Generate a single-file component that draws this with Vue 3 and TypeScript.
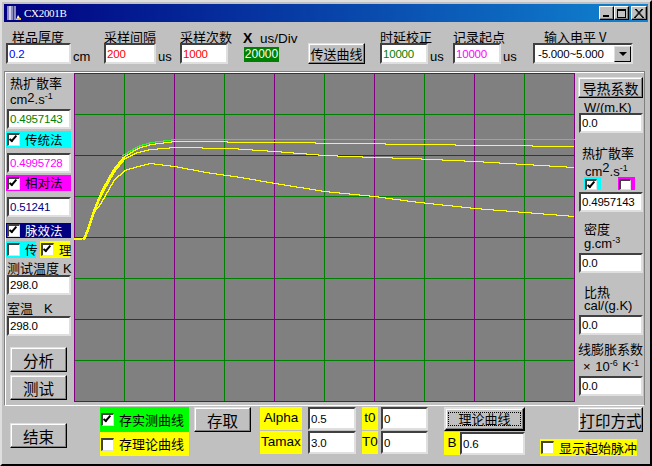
<script setup lang="ts">
type Pt = [number, number]

const xs = [124, 224, 324, 424, 524]
const xp = [74, 174, 274, 374, 474, 574]
const yg = [114, 196, 278, 360]
const yp = [73, 155, 237, 319, 401]

// Build a stepped, one-pixel trace from sampled points, like a GDI polyline.
function trace(points: Pt[]): string {
  let d = ''
  for (let i = 0; i < points.length - 1; i++) {
    const [x0, y0] = points[i]
    const [x1, y1] = points[i + 1]
    for (let x = x0; x < x1; x++) {
      const y = Math.round(y0 + ((y1 - y0) * (x - x0)) / (x1 - x0)) + 0.5
      d += `${d ? 'L' : 'M'}${x} ${y}H${x + 1}`
    }
  }
  return d
}

const rise: Pt[] = [[74, 238], [82, 238], [85, 235], [89, 224], [93, 212], [98, 199], [103, 188]]
const greenTrace = trace([[122, 155], [137, 146], [150, 142], [174, 139], [575, 139]])
const c1 = trace([...rise, [113, 170], [124, 156], [137, 148], [150, 144], [174, 141], [280, 142], [350, 143], [420, 144], [490, 145], [574, 146]])
const c2 = trace([...rise.slice(0, 6), [103, 190], [113, 172], [124, 158], [137, 152], [150, 149], [174, 147], [230, 148], [274, 151], [324, 155], [374, 157], [410, 158], [474, 161], [524, 164], [574, 167]])
const c3 = trace([...rise.slice(0, 5), [100, 203], [113, 180], [124, 170], [137, 166], [150, 163], [174, 166], [205, 172], [240, 177], [274, 183], [324, 191], [374, 196], [410, 201], [474, 208], [524, 212], [574, 216]])
const band = trace([[83, 238], [85, 235], [89, 224], [93, 212], [98, 199], [103, 188], [113, 170], [124, 156]])
</script>

<template>
  <div class="win">
    <div class="title">
      <svg class="appicon" width="16" height="16" viewBox="0 0 16 16">
        <rect x="1" y="1" width="9" height="14" fill="#8c8cc0" />
        <rect x="3" y="1" width="2" height="14" fill="#d0d0e8" />
        <rect x="7" y="1" width="1" height="14" fill="#404080" />
        <path d="M10 15l2-5 3 5z" fill="#fff" />
        <rect x="11" y="13" width="4" height="2" fill="#e0c040" />
      </svg>
      <span class="cap">CX2001B</span>
      <div class="winbtns">
        <span class="wb"><i class="min"></i></span>
        <span class="wb"><i class="max"></i></span>
        <span class="wb close">
          <svg width="10" height="9" viewBox="0 0 10 9"><path d="M1 0l8 9M2 0l8 9M9 0L1 9M8 0L0 9" stroke="#000" stroke-width="1" fill="none" /></svg>
        </span>
      </div>
    </div>

    <div class="top">
      <div class="fld f1">
        <label class="lb c">样品厚度</label>
        <div class="row"><input class="inp w64 blue" value="0.2" /><span class="unit">cm</span></div>
      </div>
      <div class="fld f2">
        <label class="lb">采样间隔</label>
        <div class="row"><input class="inp w52 red" value="200" /><span class="unit">us</span></div>
      </div>
      <div class="fld f3">
        <label class="lb">采样次数</label>
        <input class="inp w48 red" value="1000" />
      </div>
      <div class="fld f4">
        <span class="xdiv"><b>X</b> us/Div</span>
        <span class="val20">20000</span>
      </div>
      <button class="btn send">传送曲线</button>
      <div class="fld f5">
        <label class="lb">时延校正</label>
        <div class="row"><input class="inp w48 green" value="10000" /><span class="unit">us</span></div>
      </div>
      <div class="fld f6">
        <label class="lb">记录起点</label>
        <div class="row"><input class="inp w48 pink" value="10000" /><span class="unit">us</span></div>
      </div>
      <div class="fld f7">
        <label class="lb">输入电平 V</label>
        <div class="combo">
          <span>-5.000~5.000</span>
          <span class="arrow"><i></i></span>
        </div>
      </div>
    </div>

    <div class="main">
      <div class="left">
        <div class="lt first-l">热扩散率</div>
        <div class="lt latin">cm<span class="s2">2</span>.s<sup>-1</sup></div>
        <input class="inp lw green" value="0.4957143" />
        <div class="chk bgc c1r"><span class="cb on"></span><span>传统法</span></div>
        <input class="inp lw pink i2" value="0.4995728" />
        <div class="chk bgm c2r"><span class="cb on"></span><span>相对法</span></div>
        <input class="inp lw navy i3" value="0.51241" />
        <div class="chk bgn c3r"><span class="cb on"></span><span>脉效法</span></div>
        <div class="twin">
          <div class="chk bgc small"><span class="cb"></span><span>传</span></div>
          <div class="chk bgy small"><span class="cb on"></span><span>理</span></div>
        </div>
        <div class="lt tmp">测试温度<em class="k1">K</em></div>
        <input class="inp lw" value="298.0" />
        <div class="lt room">室温<em class="k2">K</em></div>
        <input class="inp lw" value="298.0" />
        <button class="btn lbtn first">分析</button>
        <button class="btn lbtn">测试</button>
      </div>

      <svg class="plot" width="501" height="329" viewBox="74 73 501 329" shape-rendering="crispEdges">
        <rect x="74" y="73" width="501" height="329" fill="#808080" />
        <path v-for="x in xs" :key="'a' + x" :d="`M${x + 0.5} 73V402`" stroke="#008000" />
        <path v-for="y in yg" :key="'b' + y" :d="`M74 ${y + 0.5}H575`" stroke="#008000" />
        <path v-for="y in yp" :key="'c' + y" :d="`M74 ${y + 0.5}H575`" stroke="#800080" />
        <path v-for="x in xp" :key="'d' + x" :d="`M${x + 0.5} 73V402`" stroke="#800080" />
        <path :d="greenTrace" fill="none" stroke="#30f030" />
        <path :d="c3" fill="none" stroke="#ffff00" />
        <path :d="c2" fill="none" stroke="#ffff00" />
        <path :d="c1" fill="none" stroke="#ffff00" />
        <path :d="band" fill="none" stroke="#ffff00" stroke-width="2" />
        <path d="M74 239.5H82" fill="none" stroke="#ffff00" />
      </svg>

      <div class="right">
        <button class="btn rbtn">导热系数</button>
        <div class="rl top0">W/(m.K)</div>
        <input class="inp rw" value="0.0" />
        <div class="rl g1">热扩散率</div>
        <div class="rl latin2">cm<span class="s2b">2</span>.s<sup>-1</sup></div>
        <div class="rchecks">
          <span class="tab cy"><span class="cb on"></span></span>
          <span class="tab mg"><span class="cb"></span></span>
        </div>
        <input class="inp rw i-chk" value="0.4957143" />
        <div class="rl g2">密度</div>
        <div class="rl l2">g.cm<sup>-3</sup></div>
        <input class="inp rw" value="0.0" />
        <div class="rl g3">比热</div>
        <div class="rl l3">cal/(g.K)</div>
        <input class="inp rw" value="0.0" />
        <div class="rl g4">线膨胀系数</div>
        <div class="rl l4">× 10<sup>-6</sup> K<sup>-1</sup></div>
        <input class="inp rw" value="0.0" />
      </div>
    </div>

    <div class="bottom">
      <button class="btn end">结束</button>
      <div class="saves">
        <div class="sv grn"><span class="cb on"></span><span>存实测曲线</span></div>
        <div class="sv yel"><span class="cb"></span><span>存理论曲线</span></div>
      </div>
      <button class="btn store">存取</button>
      <div class="params">
        <div class="pr"><span class="tag t1">Alpha</span><input class="inp pi" value="0.5" /></div>
        <div class="pr"><span class="tag t1">Tamax</span><input class="inp pi" value="3.0" /></div>
      </div>
      <div class="params p2">
        <div class="pr"><span class="tag t2">t0</span><input class="inp pi2" value="0" /></div>
        <div class="pr"><span class="tag t2">T0</span><input class="inp pi2" value="0" /></div>
      </div>
      <div class="theory">
        <button class="btn tbtn"><span>理论曲线</span></button>
        <div class="pr"><span class="tag t3">B</span><input class="inp pi3" value="0.6" /></div>
      </div>
      <div class="print">
        <button class="btn pbtn">打印方式</button>
        <div class="pulse"><span class="cb"></span><span>显示起始脉冲</span></div>
      </div>
    </div>
  </div>
</template>

<style scoped>
.win {
  width: 652px;
  height: 466px;
  box-sizing: border-box;
  background: #c0c0c0;
  border: 2px solid;
  border-color: #dfdfdf #000 #000 #dfdfdf;
  padding: 2px 2px 0;
  overflow: hidden;
  font-family: "Noto Sans CJK SC", "Liberation Sans", sans-serif;
  font-size: 13px;
  color: #000;
  display: flex;
  flex-direction: column;
}
.title {
  height: 18px;
  flex: none;
  display: flex;
  align-items: center;
  background: linear-gradient(90deg, #000080, #1084d0);
  color: #fff;
  padding: 0 1px 0 2px;
}
.appicon { flex: none; }
.cap {
  font-family: "Liberation Serif", serif;
  font-size: 11px;
  letter-spacing: -0.3px;
  margin-left: 2px;
}
.winbtns { margin-left: auto; display: flex; }
.wb {
  width: 15px;
  height: 14px;
  box-sizing: border-box;
  background: #c0c0c0;
  border: 1px solid;
  border-color: #fff #000 #000 #fff;
  box-shadow: inset -1px -1px 0 #808080;
  display: flex;
  align-items: center;
  justify-content: center;
}
.close { margin-left: 2px; width: 16px; }
.min { width: 6px; height: 2px; background: #000; margin-top: 6px; margin-right: 2px; }
.max { width: 9px; height: 9px; box-sizing: border-box; border: 1px solid #000; border-top-width: 2px; }

.top {
  height: 49px;
  flex: none;
  display: flex;
  box-sizing: border-box;
  padding-top: 9px;
}
.fld { display: flex; flex-direction: column; flex: none; }
.row { display: flex; align-items: flex-end; }
.lb { font-size: 13px; line-height: 12px; height: 12px; white-space: nowrap; }
.c { padding-left: 6px; }
.unit { font-family: "Liberation Sans", sans-serif; font-size: 13px; margin-left: 2px; line-height: 15px; }

.inp {
  box-sizing: border-box;
  display: block;
  height: 21px;
  padding: 0 0 0 1px;
  margin: 0;
  background: #fff;
  border: 2px solid;
  border-color: #404040 #dfdfdf #dfdfdf #404040;
  font-family: "Liberation Sans", sans-serif;
  font-size: 11.5px;
  letter-spacing: -0.2px;
  color: #000;
  outline: none;
  border-radius: 0;
}
.blue { color: #0000ff; }
.red { color: #ff0000; }
.green { color: #008000; }
.pink { color: #ff00ff; }
.navy { color: #000080; }
.w64 { width: 65px; }
.w52 { width: 52px; }
.w48 { width: 48px; }
.f1 { margin-left: 2px; width: 98px; }
.f2 { width: 76px; }
.f3 { width: 63px; }
.f4 { width: 65px; font-family: "Liberation Sans", sans-serif; font-size: 13.5px; }
.xdiv { height: 12px; line-height: 14px; white-space: nowrap; }
.xdiv b { font-size: 14px; margin-right: 4px; }
.val20 {
  margin-top: 4px;
  margin-left: 1px;
  width: 35px;
  height: 15px;
  line-height: 15px;
  background: #008000;
  color: #fff;
  font-size: 12px;
  text-align: center;
}

.btn {
  box-sizing: border-box;
  background: #c0c0c0;
  padding: 0;
  border: 1px solid;
  border-color: #dfdfdf #000 #000 #dfdfdf;
  box-shadow: inset -1px -1px 0 #808080, inset 1px 1px 0 #fff;
  font-family: "Noto Sans CJK SC", sans-serif;
  color: #000;
  border-radius: 0;
  white-space: nowrap;
}
.send { width: 57px; height: 21px; font-size: 13px; margin: 12px 15px 0 0; flex: none; }
.f5 { width: 73px; }
.f6 { width: 80px; }
.f7 { width: 100px; }
.f7 .lb { padding-left: 11px; }
.combo {
  width: 100px;
  height: 21px;
  box-sizing: border-box;
  border: 2px solid;
  border-color: #404040 #dfdfdf #dfdfdf #404040;
  background: #fff;
  display: flex;
  align-items: center;
  justify-content: space-between;
  font-family: "Liberation Sans", sans-serif;
  font-size: 11.5px;
  letter-spacing: -0.2px;
  padding-left: 3px;
}
.arrow {
  width: 17px;
  height: 16px;
  box-sizing: border-box;
  background: #c0c0c0;
  border: 1px solid;
  border-color: #dfdfdf #000 #000 #dfdfdf;
  display: flex;
  align-items: center;
  justify-content: center;
}
.arrow i { border: 4px solid transparent; border-top: 4px solid #000; border-bottom: 0; }

.main {
  height: 335px;
  flex: none;
  display: flex;
  box-sizing: border-box;
  margin: 0 3px 0 0;
  border: 1px solid;
  border-color: #808080 #808080 #fff #808080;
  box-shadow: inset 1px 1px 0 #fff;
  padding: 1px 0 0 1px;
}
.left { width: 68px; flex: none; display: flex; flex-direction: column; align-items: flex-start; }
.plot { flex: none; display: block; }
.right { width: 65px; flex: none; display: flex; flex-direction: column; margin-left: 3px; box-sizing: border-box; }

.lt { font-size: 13px; line-height: 16px; height: 16px; padding-left: 4px; white-space: nowrap; }
.first-l { margin-top: 2px; }
.latin { font-family: "Liberation Sans", sans-serif; font-size: 13px; height: 18px; line-height: 18px; }
.s2 { font-size: 13px; position: relative; top: -2px; }
sup { font-size: 9px; line-height: 0; vertical-align: 5px; font-family: "Liberation Sans", sans-serif; }
em { font-style: normal; font-family: "Liberation Sans", sans-serif; font-size: 13px; }
.lw { width: 64px; margin-left: 1px; height: 20px; flex: none; }
.chk {
  display: flex;
  align-items: center;
  width: 65px;
  flex: none;
  font-size: 12.5px;
  line-height: 14px;
  gap: 5px;
  padding-left: 1px;
  box-sizing: border-box;
  white-space: nowrap;
}
.c1r { height: 17px; margin-top: 2px; }
.i2 { margin-top: 5px; }
.c2r { height: 16px; margin-top: 2px; }
.i3 { margin-top: 6px; }
.c3r { height: 15px; margin-top: 6px; }
.bgc { background: #00ffff; }
.bgm { background: #ff00ff; }
.bgn { background: #000080; color: #fff; }
.bgy { background: #ffff00; }
.cb {
  display: block;
  flex: none;
  width: 13px;
  height: 13px;
  box-sizing: border-box;
  background: #fff;
  border: solid;
  border-width: 2px 1px 1px 2px;
  border-color: #404040 #dfdfdf #dfdfdf #404040;
  position: relative;
}
.cb.on::after {
  content: "";
  position: absolute;
  left: 2px;
  top: -1px;
  width: 2px;
  height: 6px;
  border: solid #000;
  border-width: 0 2px 2px 0;
  transform: rotate(40deg);
}
.twin { display: flex; margin-top: 3px; height: 17px; width: 66px; gap: 4px; flex: none; }
.small { width: 30px; height: 17px; }
.tmp { margin-top: 2px; line-height: 15px; height: 15px; padding-left: 1px; }
.k1 { margin-left: 4px; }
.room { margin-top: 5px; padding-left: 1px; }
.k2 { margin-left: 11px; }
.lbtn { width: 57px; height: 25px; margin-left: 4px; font-size: 15.5px; margin-top: 3px; flex: none; }
.first { margin-top: 11px; }

.rbtn { width: 65px; height: 21px; font-size: 14px; margin-top: 4px; flex: none; }
.rl {
  font-family: "Liberation Sans", "Noto Sans CJK SC", sans-serif;
  font-size: 13px;
  line-height: 15px;
  height: 15px;
  padding-left: 6px;
  white-space: nowrap;
  flex: none;
}
.rw { width: 64px; height: 20px; flex: none; margin-left: 1px; }
.top0 { padding-left: 6px; margin-top: 2px; height: 13px; line-height: 16px; }
.g1 { margin-top: 12px; height: 16px; line-height: 16px; font-family: "Noto Sans CJK SC", sans-serif; padding-left: 4px; }
.latin2 { height: 16px; line-height: 22px; padding-left: 7px; }
.s2b { position: relative; top: -4px; }
.rchecks { display: flex; padding-left: 6px; gap: 17px; height: 13px; flex: none; }
.tab { display: block; width: 17px; height: 13px; padding: 2px 0 0 1px; box-sizing: border-box; }
.tab .cb { width: 12px; height: 11px; }
.cy { background: #00ffff; }
.mg { background: #ff00ff; }
.i-chk { margin-top: 2px; }
.g2, .g3, .g4 { font-family: "Noto Sans CJK SC", sans-serif; height: 16px; line-height: 16px; }
.g2 { margin-top: 9px; }
.l2 { height: 16px; line-height: 13px; }
.g3 { margin-top: 11px; }
.l3 { line-height: 12px; }
.g4 { margin-top: 6px; padding-left: 0; }
.l4 { height: 19px; line-height: 19px; padding-left: 5px; word-spacing: 1px; }

.bottom { flex: 1; display: flex; min-height: 0; }
.end { width: 57px; height: 25px; font-size: 15.5px; margin: 17px 0 0 6px; flex: none; }
.saves { margin-left: 33px; margin-top: 1px; width: 89px; flex: none; }
.sv { display: flex; align-items: center; font-size: 13px; line-height: 14px; gap: 5px; padding-left: 1px; box-sizing: border-box; }
.grn { background: #00ff00; height: 25px; }
.yel { background: #ffff00; height: 24px; }
.store { width: 57px; height: 25px; font-size: 15.5px; margin: 1px 0 0 5px; flex: none; }
.params { margin: 1px 0 0 9px; flex: none; display: flex; flex-direction: column; gap: 1px; }
.pr { display: flex; height: 23px; }
.tag {
  background: #ffff00;
  font-family: "Liberation Sans", sans-serif;
  font-size: 13.5px;
  text-align: center;
  line-height: 22px;
  white-space: nowrap;
}
.t1 { width: 42px; }
.pi { width: 48px; margin-left: 6px; height: 23px; }
.p2 { margin-left: 6px; }
.t2 { width: 16px; }
.pi2 { width: 47px; margin-left: 3px; height: 23px; }
.theory { margin: 1px 0 0 16px; flex: none; display: flex; flex-direction: column; width: 81px; }
.tbtn {
  width: 81px;
  height: 24px;
  font-size: 13px;
  border: 2px solid #000;
  border-top-color: #dfdfdf;
  border-left-color: #dfdfdf;
  padding: 2px;
  flex: none;
}
.tbtn span { display: block; height: 14px; line-height: 14px; outline: 1px dotted #000; outline-offset: -1px; }
.theory .pr { margin-top: 1px; }
.t3 { width: 16px; }
.pi3 { width: 65px; height: 23px; }
.print { margin-left: 15px; flex: none; width: 103px; }
.pbtn { width: 65px; height: 25px; font-size: 15.5px; margin: 1px 0 0 38px; display: block; }
.pulse {
  display: flex;
  align-items: center;
  gap: 5px;
  background: #ffff00;
  width: 97px;
  height: 17px;
  margin-top: 7px;
  padding-left: 1px;
  box-sizing: border-box;
  font-size: 13px;
  line-height: 14px;
  white-space: nowrap;
}
</style>

<style>
body { margin: 0; }
</style>
